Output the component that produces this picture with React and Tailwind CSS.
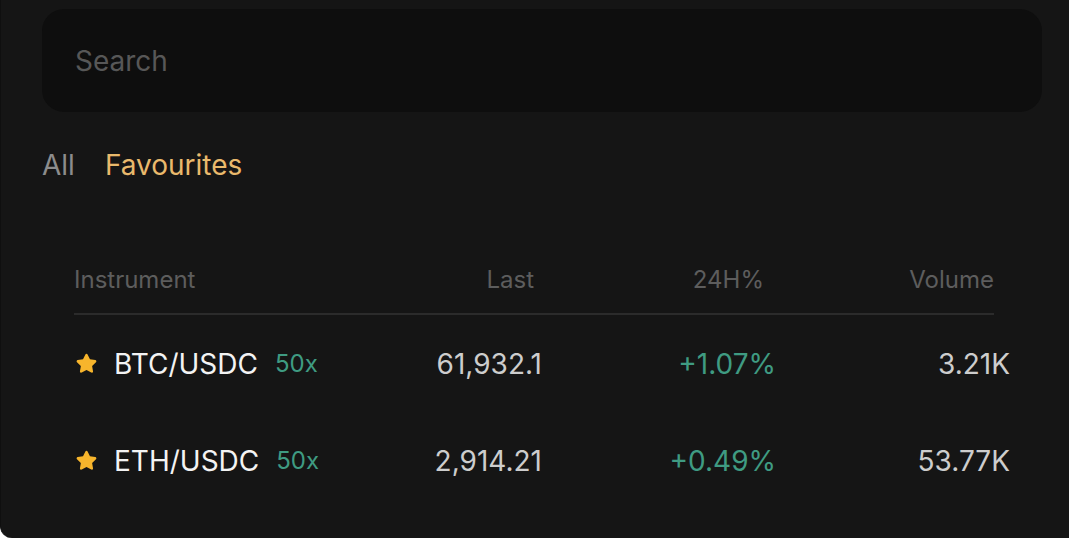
import React from "react";

const Star = () => (
  <svg width="25" height="25" viewBox="0 0 24 24" className="shrink-0">
    <path
      d="M12 2.6c.45 0 .85.26 1.04.67l2.28 4.7 5.13.74c.45.07.82.38.96.81.14.43.02.9-.3 1.22l-3.72 3.64.88 5.12c.08.45-.11.9-.48 1.16-.37.27-.86.3-1.26.09L12 18.34l-4.55 2.41c-.4.21-.89.18-1.26-.09a1.17 1.17 0 0 1-.48-1.16l.88-5.12-3.72-3.64a1.18 1.18 0 0 1-.3-1.22c.14-.43.51-.74.96-.81l5.13-.74 2.28-4.7c.19-.41.6-.67 1.04-.67Z"
      fill="#f7b52c"
    />
  </svg>
);

const rows = [
  { sym: "BTC/USDC", last: "61,932.1", chg: "+1.07%", vol: "3.21K" },
  { sym: "ETH/USDC", last: "2,914.21", chg: "+0.49%", vol: "53.77K" },
];

export default function App() {
  return (
    <div
      className="w-[1069px] h-[538px] bg-[#151515] overflow-hidden border-l border-[#0f0f0f] rounded-bl-[12px]"
      style={{ fontFamily: "Inter, 'Noto Sans', sans-serif" }}
    >
      <div className="pt-[9px] pl-[41px]">
        <div className="w-[1000px] h-[103px] rounded-[22px] bg-[#0e0e0e] flex items-center pl-[33px]">
          <span className="text-[28px] text-[#575757] leading-none">Search</span>
        </div>
      </div>

      <div className="flex items-center gap-[30px] pl-[41px] mt-[38px] h-[30px]">
        <span className="text-[28px] text-[#8c8c8c] leading-none">All</span>
        <span className="text-[28px] text-[#e9b96c] leading-none">Favourites</span>
      </div>

      <div className="pl-[73px] mt-[86px]">
        <div className="w-[920px] flex items-center h-[28px] text-[24px] text-[#5d5d5d] leading-none">
          <div className="w-[230px]">Instrument</div>
          <div className="w-[230px] text-right">Last</div>
          <div className="w-[230px] text-right">24H%</div>
          <div className="w-[230px] text-right">Volume</div>
        </div>
        <div className="w-[920px] h-[2px] bg-[#2b2b2b] mt-[19px]" />
        <div className="w-[936px]">
          {rows.map((r) => (
            <div key={r.sym} className="flex items-center h-[97px] text-[28px] leading-none">
              <div className="w-[234px] flex items-center">
                <Star />
                <span className="ml-[15px] text-[#f3f3f3]">{r.sym}</span>
                <span className="ml-[17px] text-[24px] text-[#3f9b82]">50x</span>
              </div>
              <div className="w-[234px] text-right text-[#cdcdcd]">{r.last}</div>
              <div className="w-[234px] text-right text-[#3f9b82]">{r.chg}</div>
              <div className="w-[234px] text-right text-[#cdcdcd]">{r.vol}</div>
            </div>
          ))}
        </div>
      </div>
    </div>
  );
}
